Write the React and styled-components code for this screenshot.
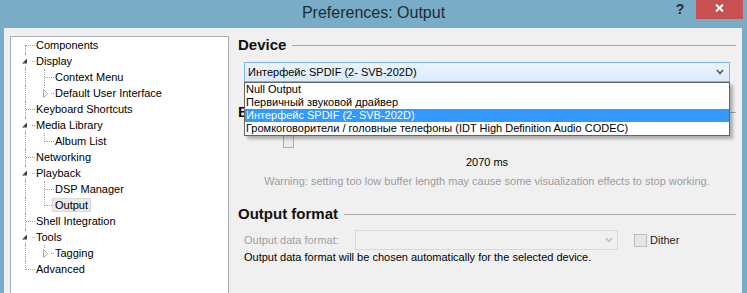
import React from 'react';
import styled, { createGlobalStyle } from 'styled-components';

const GlobalStyle = createGlobalStyle`
  html, body { margin: 0; padding: 0; background: #79acc7; }
  body { font-family: "Liberation Sans", Arial, sans-serif; font-size: 11px; color: #000; }
  * { box-sizing: border-box; }
`;

const Window = styled.div`
  width: 747px;
  height: 293px;
  background: #79acc7;
  display: flex;
  flex-direction: column;
  overflow: hidden;
`;

const TitleBar = styled.header`
  flex: none;
  height: 28px;
  display: grid;
  grid-template-columns: 1fr auto 1fr;
  align-items: start;
`;

const Title = styled.h1`
  grid-column: 2;
  margin: 0;
  font: normal 16px/26px "Liberation Sans", Arial, sans-serif;
  color: #1c2b38;
`;

const Controls = styled.div`
  grid-column: 3;
  justify-self: end;
  display: flex;
  margin-right: 4px;
`;

const HelpButton = styled.button`
  width: 32px;
  height: 19px;
  border: 0;
  padding: 0;
  background: none;
  font: bold 14px/17px "Liberation Sans", Arial, sans-serif;
  color: #1f2d3a;
`;

const CloseButton = styled.button`
  width: 47px;
  height: 19px;
  border: 0;
  padding: 4px 0 0;
  background: #c75050;
  display: flex;
  justify-content: center;
  align-items: flex-start;
`;

const Client = styled.div`
  flex: 1;
  min-height: 0;
  margin: 0 5px 0 4px;
  background: #f0f0f0;
  display: flex;
  padding: 8px 0 0 6px;
  overflow: hidden;
`;

const Tree = styled.nav`
  flex: none;
  width: 219px;
  margin-bottom: -4px;
  background: #fff;
  border: 1px solid #abadb3;
  padding: 0 0 0 5px;
`;

const Row = styled.div`
  display: flex;
  align-items: center;
  height: 16px;
  white-space: nowrap;
`;

const Guide = styled.span`
  position: relative;
  flex: none;
  width: 19px;
  align-self: stretch;
  &::before {
    content: '';
    display: ${(p) => (p.$line ? 'block' : 'none')};
    position: absolute;
    left: 9px;
    top: 0;
    bottom: 0;
    border-left: 1px dotted #a0a0a0;
  }
`;

const Joint = styled.span`
  position: relative;
  flex: none;
  width: 19px;
  align-self: stretch;
  &::before {
    content: '';
    position: absolute;
    left: 9px;
    top: ${(p) => (p.$up ? 0 : 8)}px;
    bottom: ${(p) => (p.$down ? 0 : 7)}px;
    border-left: 1px dotted #a0a0a0;
  }
  &::after {
    content: '';
    position: absolute;
    left: 10px;
    right: 0;
    top: 8px;
    border-top: 1px dotted #a0a0a0;
  }
`;

const ExpanderIcon = styled.svg`
  position: absolute;
  left: 0;
  top: 0;
  z-index: 1;
`;

const Label = styled.span`
  margin-left: -2px;
  padding: 0 2px;
  height: 14px;
  line-height: 12px;
  border: 1px solid ${(p) => (p.$selected ? '#d9d9d9' : 'transparent')};
  background: ${(p) => (p.$selected ? '#e9e9e9' : 'transparent')};
  position: relative;
  z-index: 1;
`;

const Pane = styled.main`
  flex: 1;
  min-width: 0;
  display: flex;
  flex-direction: column;
  padding: 0 6px 0 9px;
`;

const Heading = styled.h2`
  margin: ${(p) => p.$gap}px 0 0;
  height: 18px;
  display: flex;
  align-items: center;
  gap: 6px;
  font: bold 15px/18px "Liberation Sans", Arial, sans-serif;
  color: #111;
  &::after {
    content: '';
    flex: 1;
    height: 1px;
    background: #a9a9a9;
  }
`;

const ComboWrap = styled.div`
  position: relative;
  margin: 8px 6px 0;
`;

const Combo = styled.div`
  height: 20px;
  display: flex;
  align-items: center;
  padding: 0 5px 0 3px;
  border: 1px solid #7eb4ea;
  background: linear-gradient(#edf5fc, #d9eafb);
`;

const ComboText = styled.span`
  flex: 1;
  line-height: 18px;
`;

const DropList = styled.ul`
  position: absolute;
  top: 100%;
  left: 0;
  right: 0;
  margin: 0;
  padding: 0;
  list-style: none;
  background: #fff;
  border: 1px solid #646464;
  box-shadow: 3px 3px 3px rgba(0, 0, 0, 0.28);
  z-index: 5;
`;

const DropItem = styled.li`
  height: 13px;
  line-height: 13px;
  padding-left: 1px;
  white-space: nowrap;
  background: ${(p) => (p.$selected ? '#3399ff' : 'transparent')};
  color: ${(p) => (p.$selected ? '#fff' : '#000')};
`;

const Slider = styled.div`
  position: relative;
  height: 24px;
  margin: 3px 6px 0;
`;

const Track = styled.div`
  position: absolute;
  left: 5px;
  right: 5px;
  top: 6px;
  height: 4px;
  background: #e7eaea;
  border: 1px solid #d6d6d6;
`;

const Thumb = styled.div`
  position: absolute;
  top: 2px;
  width: 11px;
  height: 22px;
  background: #ececec;
  border: 1px solid #adadad;
`;

const ValueText = styled.div`
  margin-top: 7px;
  line-height: 14px;
  text-align: center;
`;

const Warning = styled.div`
  margin-top: 5px;
  line-height: 14px;
  text-align: center;
  color: #9c9c9c;
`;

const FormatRow = styled.div`
  display: flex;
  align-items: center;
  height: 20px;
  margin: 7px 6px 0;
`;

const FieldLabel = styled.span`
  flex: none;
  width: 111px;
  color: #a0a0a0;
`;

const DisabledCombo = styled.div`
  flex: none;
  width: 263px;
  height: 20px;
  border: 1px solid #d9d9d9;
  background: #f0f0f0;
  display: flex;
  justify-content: flex-end;
  align-items: center;
  padding-right: 4px;
`;

const CheckBox = styled.span`
  flex: none;
  margin-left: 16px;
  width: 13px;
  height: 13px;
  border: 1px solid #bcbcbc;
  background: #e6e6e6;
`;

const CheckLabel = styled.span`
  margin-left: 3px;
  color: #222;
`;

const Note = styled.div`
  margin: 0 6px;
  line-height: 14px;
`;

const Chevron = ({ color, width = 1.6 }) => (
  <svg width="8" height="6" viewBox="0 0 8 6">
    <polyline points="1,1 4,4.5 7,1" fill="none" stroke={color} strokeWidth={width} />
  </svg>
);

const Expander = ({ open }) => (
  <ExpanderIcon width="19" height="16" viewBox="0 0 19 16">
    <rect x="2" y="3" width="13" height="10" fill="#fff" />
    {open ? (
      <polygon points="11,5.5 11,10.5 6,10.5" fill="#454545" />
    ) : (
      <polygon points="8.5,4.5 8.5,12.5 12.5,8.5" fill="#fff" stroke="#a6a6a6" strokeWidth="1" />
    )}
  </ExpanderIcon>
);

const tree = [
  { label: 'Components' },
  {
    label: 'Display',
    children: [{ label: 'Context Menu' }, { label: 'Default User Interface', collapsed: true }],
  },
  { label: 'Keyboard Shortcuts' },
  { label: 'Media Library', children: [{ label: 'Album List' }] },
  { label: 'Networking' },
  { label: 'Playback', children: [{ label: 'DSP Manager' }, { label: 'Output', selected: true }] },
  { label: 'Shell Integration' },
  { label: 'Tools', children: [{ label: 'Tagging', collapsed: true }] },
  { label: 'Advanced' },
];

function flatten(nodes, ancestors = [], out = [], root = true) {
  nodes.forEach((n, i) => {
    const last = i === nodes.length - 1;
    out.push({
      ...n,
      ancestors,
      up: !(root && i === 0),
      down: !last,
      expander: n.children ? 'open' : n.collapsed ? 'closed' : null,
    });
    if (n.children) flatten(n.children, [...ancestors, !last], out, false);
  });
  return out;
}

const rows = flatten(tree);

const devices = [
  'Null Output',
  'Первичный звуковой драйвер',
  'Интерфейс SPDIF (2- SVB-202D)',
  'Громкоговорители / головные телефоны (IDT High Definition Audio CODEC)',
];
const selectedDevice = 2;

const buffer = { min: 1000, max: 14000, value: 2070 };

export default function App() {
  const frac = (buffer.value - buffer.min) / (buffer.max - buffer.min);
  return (
    <>
      <GlobalStyle />
      <Window>
        <TitleBar>
          <Title>Preferences: Output</Title>
          <Controls>
            <HelpButton>?</HelpButton>
            <CloseButton aria-label="Close">
              <svg width="9" height="8" viewBox="0 0 9 8">
                <path d="M1 0.5 L8 7.5 M8 0.5 L1 7.5" stroke="#fff" strokeWidth="2" />
              </svg>
            </CloseButton>
          </Controls>
        </TitleBar>
        <Client>
          <Tree>
            {rows.map((r) => (
              <Row key={r.label}>
                {r.ancestors.map((cont, i) => (
                  <Guide key={i} $line={cont} />
                ))}
                <Joint $up={r.up} $down={r.down}>
                  {r.expander && <Expander open={r.expander === 'open'} />}
                </Joint>
                <Label $selected={r.selected}>{r.label}</Label>
              </Row>
            ))}
          </Tree>
          <Pane>
            <Heading $gap={0}>Device</Heading>
            <ComboWrap>
              <Combo>
                <ComboText>{devices[selectedDevice]}</ComboText>
                <Chevron color="#555" />
              </Combo>
              <DropList>
                {devices.map((d, i) => (
                  <DropItem key={d} $selected={i === selectedDevice}>
                    {d}
                  </DropItem>
                ))}
              </DropList>
            </ComboWrap>
            <Heading $gap={21}>Buffer length</Heading>
            <Slider>
              <Track />
              <Thumb style={{ left: `calc(${frac} * (100% - 10px) + 5px - 5.5px)` }} />
            </Slider>
            <ValueText>{buffer.value} ms</ValueText>
            <Warning>
              Warning: setting too low buffer length may cause some visualization effects to stop working.
            </Warning>
            <Heading $gap={17}>Output format</Heading>
            <FormatRow>
              <FieldLabel>Output data format:</FieldLabel>
              <DisabledCombo>
                <Chevron color="#b8b8b8" width={1.2} />
              </DisabledCombo>
              <CheckBox />
              <CheckLabel>Dither</CheckLabel>
            </FormatRow>
            <Note>Output data format will be chosen automatically for the selected device.</Note>
          </Pane>
        </Client>
      </Window>
    </>
  );
}
